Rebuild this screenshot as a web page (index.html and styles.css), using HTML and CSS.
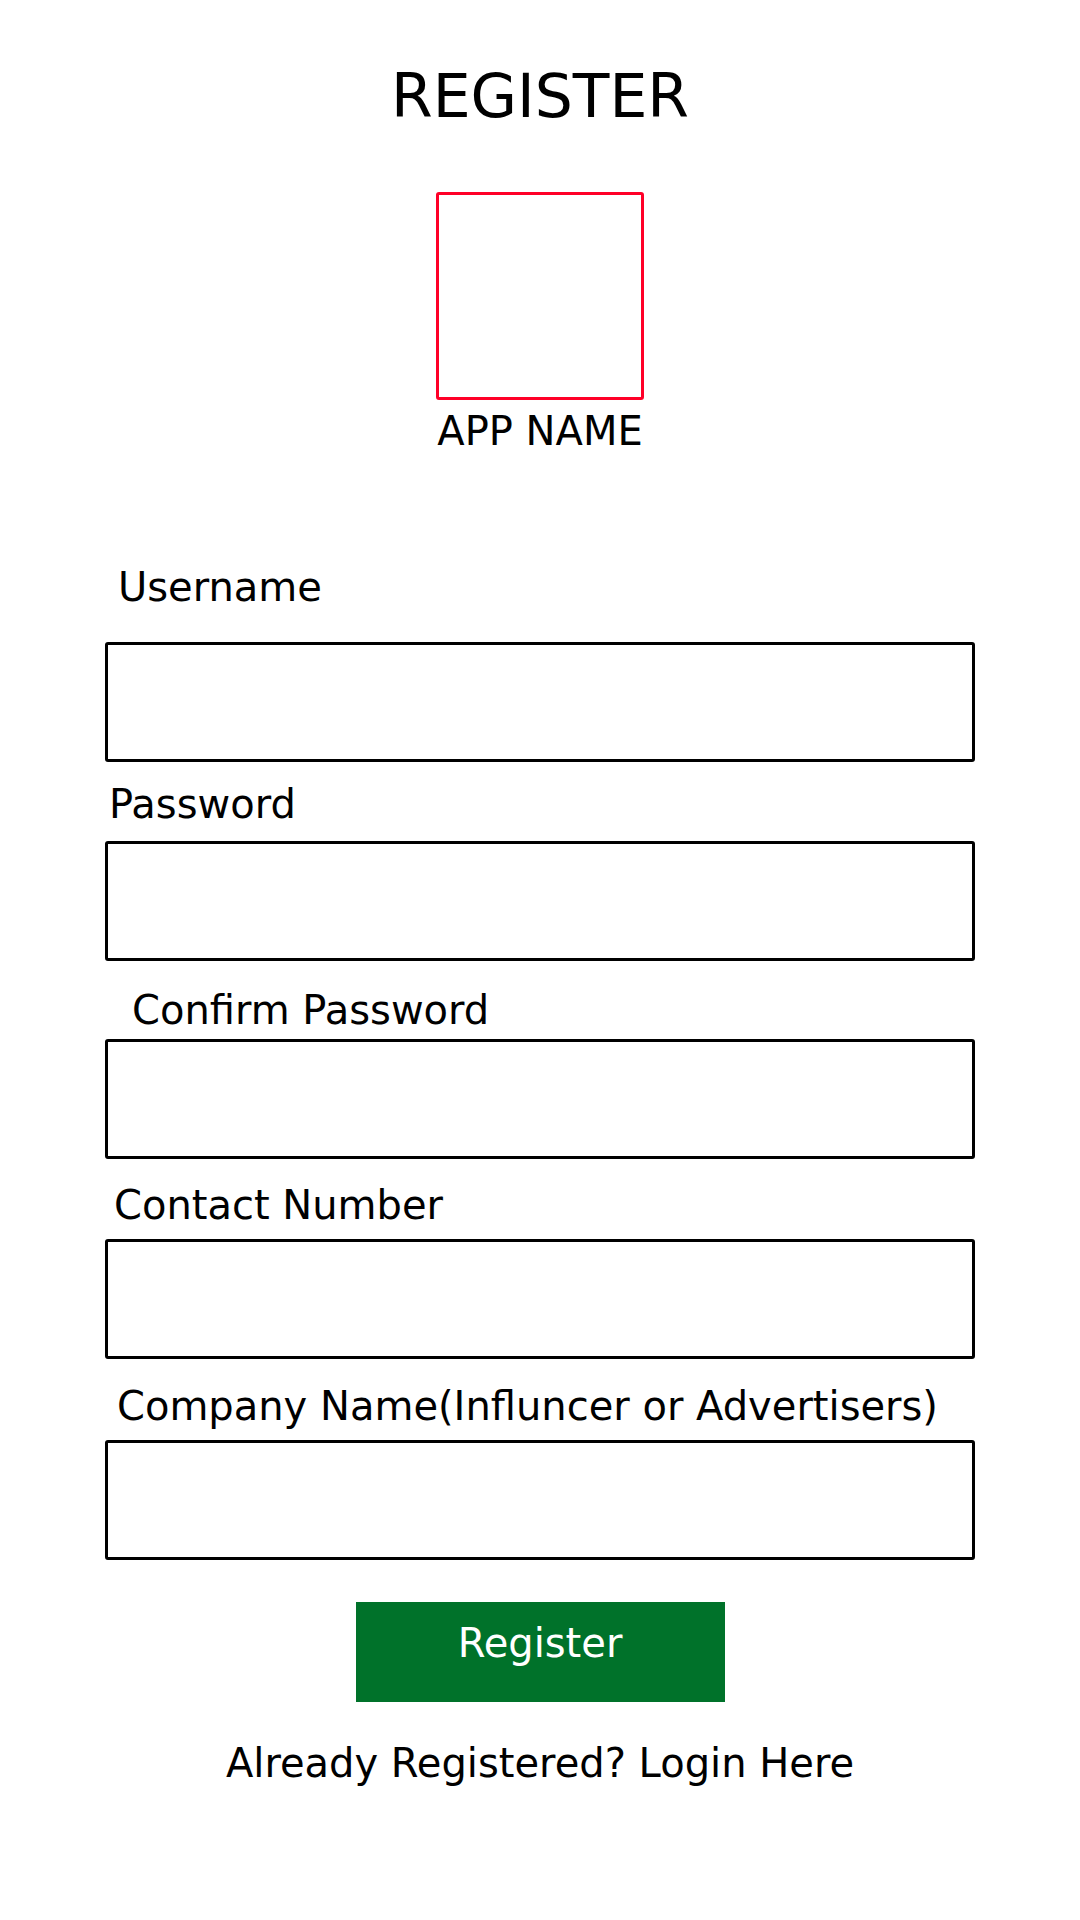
FILE: index.html
```html
<!DOCTYPE html>
<html lang="en">
<head>
<meta charset="utf-8">
<title>Register</title>
<link rel="stylesheet" href="styles.css">
</head>
<body>
<main class="page">
  <h1 class="title">REGISTER</h1>
  <div class="logo"></div>
  <div class="app-name">APP NAME</div>

  <form class="form">
    <label class="label label--username">Username</label>
    <div class="input input--username"></div>

    <label class="label label--password">Password</label>
    <div class="input input--password"></div>

    <label class="label label--confirm">Confirm Password</label>
    <div class="input input--confirm"></div>

    <label class="label label--contact">Contact Number</label>
    <div class="input input--contact"></div>

    <label class="label label--company">Company Name(Influncer or Advertisers)</label>
    <div class="input input--company"></div>

    <div class="btn">Register</div>
    <div class="login-link">Already Registered? Login Here</div>
  </form>
</main>
</body>
</html>
```

FILE: styles.css
```css
* { box-sizing: border-box; }

html, body {
  margin: 0;
  padding: 0;
  background: #ffffff;
}

body {
  font-family: "DejaVu Sans", sans-serif;
  color: #000000;
  width: 1080px;
  height: 1920px;
}

.page {
  display: flex;
  flex-direction: column;
  align-items: center;
  padding-top: 61px;
}

.title {
  margin: 0;
  font-size: 60px;
  font-weight: normal;
  line-height: normal;
}

.logo {
  margin-top: 61px;
  margin-left: -1px;
  width: 208px;
  height: 208px;
  border: 3px solid #ff0028;
  border-radius: 3px;
}

.app-name {
  margin-top: 8px;
  font-size: 40px;
  line-height: normal;
}

.form {
  width: 870px;
  display: flex;
  flex-direction: column;
  align-items: stretch;
}

.label {
  font-size: 40px;
  line-height: normal;
}

.label--username { margin-top: 110px; padding-left: 13px; margin-bottom: 32px; }
.label--password { margin-top: 19px; padding-left: 4px; margin-bottom: 14px; }
.label--confirm  { margin-top: 26px; padding-left: 27px; margin-bottom: 6px; }
.label--contact  { margin-top: 23px; padding-left: 9px; margin-bottom: 11px; }
.label--company  { margin-top: 24px; padding-left: 12px; margin-bottom: 11px; }

.input {
  height: 120px;
  border: 3px solid #000000;
  border-radius: 3px;
}

.btn {
  align-self: center;
  margin-top: 42px;
  width: 369px;
  height: 100px;
  background: #00722a;
  color: #ffffff;
  font-size: 40px;
  display: flex;
  justify-content: center;
  align-items: flex-start;
  padding-top: 18px;
}

.login-link {
  align-self: center;
  margin-top: 38px;
  font-size: 40px;
  line-height: normal;
}
```
